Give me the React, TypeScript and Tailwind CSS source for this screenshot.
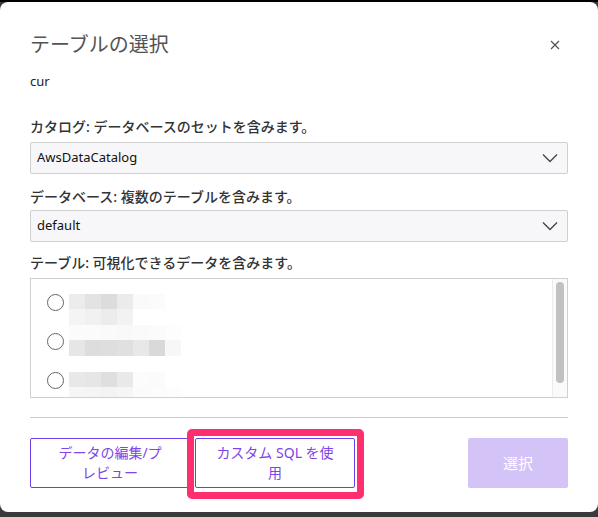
import React from "react";

const FONT = { fontFamily: '"Noto Sans", "Noto Sans CJK JP", sans-serif' };

type Cell = string;
const rows: { a: Cell[]; b: Cell[]; radioTop: string; mt: string }[] = [
  {
    a: ["bg-[#ececec]", "bg-[#e3e3e3]", "bg-[#dcdcdc]", "bg-[#ebebeb]", "bg-[#fafafa]", "bg-[#fbfbfb]"],
    b: ["bg-[#f4f4f4]", "bg-[#f1f1f1]", "bg-[#ececec]", "bg-[#f2f2f2]"],
    radioTop: "mt-[0px]",
    mt: "mt-[15px]",
  },
  {
    a: ["bg-[#fbfbfb]", "bg-[#fbfbfb]", "bg-[#fafafa]", "bg-[#f9f9f9]", "bg-[#fafafa]", "bg-[#fbfbfb]", "bg-[#fdfdfd]"],
    b: ["bg-[#e6e6e6]", "bg-[#dddddd]", "bg-[#dedede]", "bg-[#e0e0e0]", "bg-[#e8e8e8]", "bg-[#d9d9d9]", "bg-[#f7f7f7]"],
    radioTop: "mt-[8px]",
    mt: "mt-[0px]",
  },
  {
    a: ["bg-[#e8e8e8]", "bg-[#e6e6e6]", "bg-[#dfdfdf]", "bg-[#e9e9e9]", "bg-[#fcfcfc]", "bg-[#fbfbfb]"],
    b: ["bg-[#f6f6f6]", "bg-[#f5f5f5]", "bg-[#f3f3f3]", "bg-[#f6f6f6]", "bg-[#fbfbfb]", "bg-[#fcfcfc]", "bg-[#fdfdfd]"],
    radioTop: "mt-[0px]",
    mt: "mt-[16px]",
  },
];

function Chevron() {
  return (
    <svg width="16" height="10" viewBox="0 0 16 10" className="shrink-0">
      <polyline points="1,1.5 8,8.5 15,1.5" fill="none" stroke="#444" strokeWidth="1.3" />
    </svg>
  );
}

function Select({ value }: { value: string }) {
  return (
    <div className="flex h-[32px] items-center justify-between rounded-[2px] border border-[#cfcfcf] bg-[#f7f7f9] pl-[6px] pr-[9px]">
      <span className="text-[13px] text-[#111]">{value}</span>
      <Chevron />
    </div>
  );
}

export default function App() {
  return (
    <div className="flex h-[517px] w-[598px] flex-col bg-[#3a3a3a]" style={FONT}>
      <div className="h-[2px] bg-black" />
      <div className="relative h-[510px] rounded-[8px] bg-white px-[30px] pt-[29px]">
        <div className="flex items-center justify-between">
          <h1 className="text-[20px] leading-[28px] font-normal text-[#545454]">テーブルの選択</h1>
          <svg width="10" height="10" viewBox="0 0 10 10" className="mr-[8px]">
            <path d="M1 1 L9 9 M9 1 L1 9" stroke="#555" strokeWidth="1.3" />
          </svg>
        </div>
        <div className="mt-[13px] text-[13px] leading-[18px] text-[#222]">cur</div>

        <div className="mt-[28px] text-[14px] leading-[18px] font-medium text-[#333]">
          カタログ: データベースのセットを含みます。
        </div>
        <div className="mt-[6px]">
          <Select value="AwsDataCatalog" />
        </div>

        <div className="mt-[14px] text-[14px] leading-[18px] font-medium text-[#333]">
          データベース: 複数のテーブルを含みます。
        </div>
        <div className="mt-[4px]">
          <Select value="default" />
        </div>

        <div className="mt-[12px] text-[14px] leading-[18px] font-medium text-[#333]">
          テーブル: 可視化できるデータを含みます。
        </div>
        <div className="mt-[6px] flex h-[120px] overflow-hidden border border-[#cfcfcf] bg-white">
          <div className="flex-1 pl-[16px]">
            {rows.map((r, i) => (
              <div key={i} className={`flex items-start gap-[5px] ${r.mt}`}>
                <div className={`h-[17px] w-[17px] shrink-0 rounded-full border border-[#666] bg-white ${r.radioTop}`} />
                <div className="flex flex-col">
                  <div className="flex">
                    {r.a.map((c, j) => (
                      <div key={j} className={`h-[15px] w-[16px] ${c}`} />
                    ))}
                  </div>
                  <div className="flex">
                    {r.b.map((c, j) => (
                      <div key={j} className={`h-[16px] w-[16px] ${c}`} />
                    ))}
                  </div>
                </div>
              </div>
            ))}
          </div>
          <div className="flex w-[15px] justify-center border-l border-[#ebebeb] bg-[#fafafa] pt-[3px]">
            <div className="h-[101px] w-[8px] rounded-full bg-[#c1c1c1]" />
          </div>
        </div>

        <div className="mt-[19px] h-px bg-[#cccccc]" />

        <div className="relative mt-[20px] flex items-start">
          <div className="flex h-[50px] w-[160px] items-center justify-center rounded-[2px] border border-[#6b3ee9] text-center text-[14px] leading-[20px] text-[#7d45ea]">
            <span>
              データの編集/プ
              <br />
              レビュー
            </span>
          </div>
          <div className="ml-[5px] flex h-[50px] w-[160px] items-center justify-center rounded-[2px] border border-[#6b3ee9] text-center text-[14px] leading-[20px] text-[#7d45ea]">
            <span>
              カスタム SQL を使
              <br />
              用
            </span>
          </div>
          <div className="ml-auto flex h-[50px] w-[100px] items-center justify-center rounded-[2px] bg-[#d4c3f6] text-[15px] text-white">
            選択
          </div>
          <div className="absolute left-[157px] top-[-9px] h-[70px] w-[177px] rounded-[5px] border-[7px] border-[#ff2e6e]" />
        </div>
      </div>
    </div>
  );
}
